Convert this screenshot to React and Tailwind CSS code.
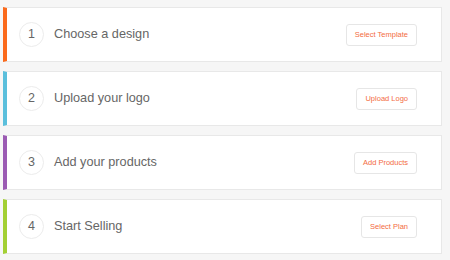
export default function App() {
  const steps = [
    { n: 1, title: "Choose a design", btn: "Select Template", color: "border-l-[#fb6a1c]" },
    { n: 2, title: "Upload your logo", btn: "Upload Logo", color: "border-l-[#5bbfdc]" },
    { n: 3, title: "Add your products", btn: "Add Products", color: "border-l-[#9b5bb3]" },
    { n: 4, title: "Start Selling", btn: "Select Plan", color: "border-l-[#a3d034]" },
  ];
  return (
    <div className="w-[450px] h-[260px] bg-[#f6f6f6] pt-[7px] pl-[3px] pr-[8px] flex flex-col gap-[9px] font-['Liberation_Sans',Arial,sans-serif]">
      {steps.map((s) => (
        <div
          key={s.n}
          className={`h-[55px] bg-white border border-[#e8e8e8] border-l-4 ${s.color} flex items-center pl-[12px] pr-[24px]`}
        >
          <div className="w-[25px] h-[25px] rounded-full border border-[#ececec] flex items-center justify-center text-[12.5px] text-[#666]">
            {s.n}
          </div>
          <div className="ml-[10px] text-[12.7px] text-[#666] flex-1">{s.title}</div>
          <div className="h-[22px] px-[8px] border border-[#e6e6e6] rounded-[3px] flex items-center text-[7.5px] text-[#f36c3f] bg-white">
            {s.btn}
          </div>
        </div>
      ))}
    </div>
  );
}
